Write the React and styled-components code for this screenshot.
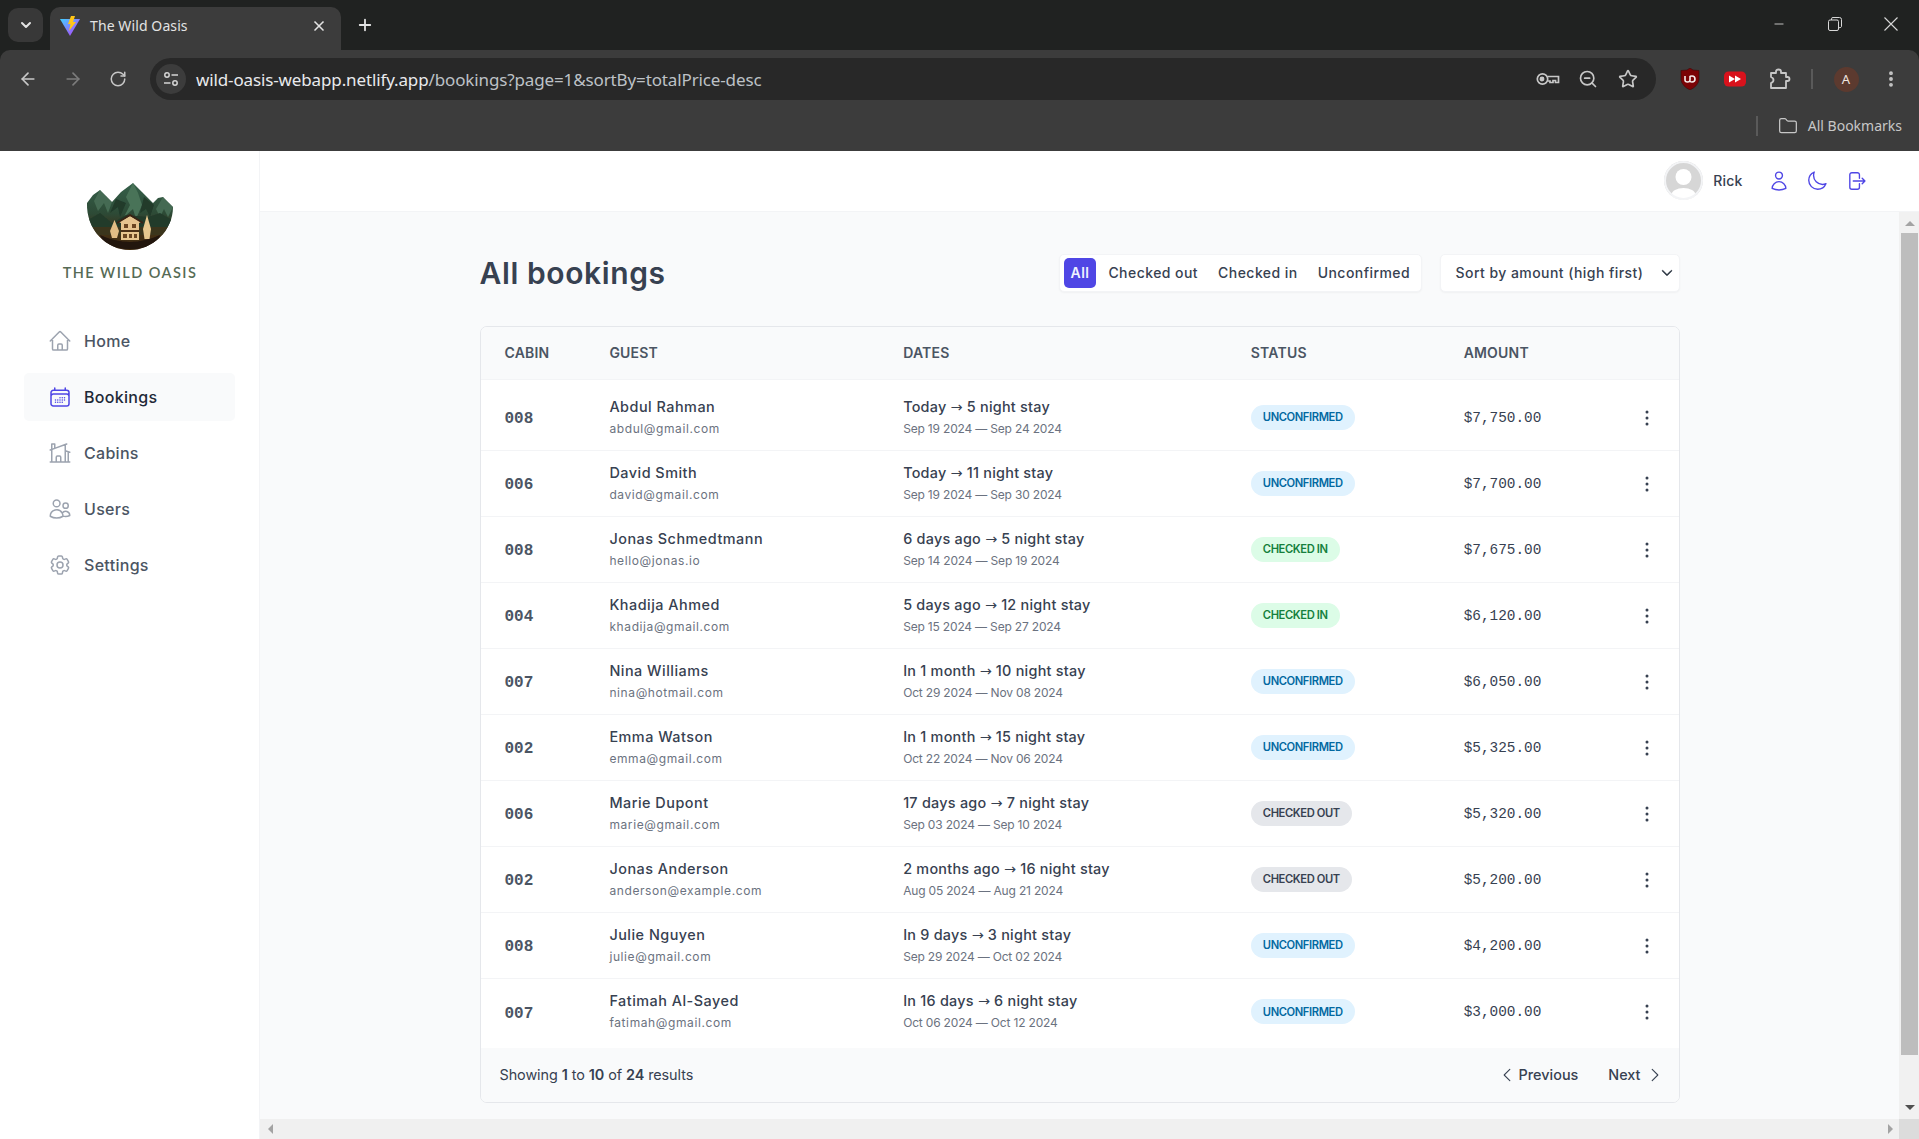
import React from 'react';
import styled, { createGlobalStyle } from 'styled-components';
import {
  HiOutlineHome,
  HiOutlineCalendarDays,
  HiOutlineHomeModern,
  HiOutlineUsers,
  HiOutlineCog6Tooth,
  HiOutlineUser,
  HiOutlineMoon,
  HiOutlineArrowRightOnRectangle,
  HiEllipsisVertical,
  HiChevronLeft,
  HiChevronRight,
  HiChevronDown,
} from 'react-icons/hi2';
import { ArrowLeft, ArrowRight, RotateCw, Star, ZoomOut, Folder, X, Plus, ChevronDown, Minus, EllipsisVertical } from 'lucide-react';

const uiFont = '"Inter", "Noto Sans", sans-serif';
const chromeFont = '"Noto Sans", "Open Sans", sans-serif';
const monoFont = '"Liberation Mono", monospace';

const GlobalStyle = createGlobalStyle`
  * { box-sizing: border-box; }
  html, body { margin: 0; padding: 0; overflow: hidden; }
  body { font-family: ${uiFont}; color: #374151; background: #fff; }
`;

const Browser = styled.div`
  width: 1919px;
  height: 1139px;
  display: flex;
  flex-direction: column;
  overflow: hidden;
  background: #202221;
`;

/* browser chrome */
const TabStrip = styled.div`
  height: 50px;
  flex: none;
  background: #202221;
  display: flex;
  align-items: flex-end;
  padding-left: 8px;
  color: #e3e3e3;
`;

const TabListButton = styled.div`
  width: 35px;
  height: 34px;
  margin-bottom: 8px;
  border-radius: 10px;
  background: #383838;
  display: flex;
  align-items: center;
  justify-content: center;
`;

const Tab = styled.div`
  width: 291px;
  height: 43px;
  margin-left: 7px;
  background: #3c3c3c;
  border-radius: 10px 10px 0 0;
  display: flex;
  align-items: center;
  padding: 0 14px 6px 10px;
  font-family: ${chromeFont};
  font-size: 14px;
  letter-spacing: 0.1px;
`;

const TabTitle = styled.span`
  flex: 1;
  margin-left: 10px;
`;

const NewTab = styled.div`
  margin: 0 0 8px 15px;
  height: 34px;
  display: flex;
  align-items: center;
`;

const WindowControls = styled.div`
  margin-left: auto;
  align-self: flex-start;
  height: 48px;
  display: flex;
  align-items: center;
`;

const WindowButton = styled.div`
  width: 56px;
  display: flex;
  justify-content: center;
`;

const Toolbar = styled.div`
  height: 50px;
  flex: none;
  background: #3c3c3c;
  border-radius: 10px 10px 0 0;
  display: flex;
  align-items: flex-start;
  padding: 8px 0 0 9px;
  color: #c7c7c7;
`;

const NavButton = styled.div`
  width: 37px;
  height: 42px;
  margin-right: 8px;
  display: flex;
  align-items: center;
  justify-content: center;
  color: ${(p) => (p.$dim ? '#7c7c7c' : '#c7c7c7')};
`;

const AddressBar = styled.div`
  width: 1506px;
  height: 42px;
  margin-left: 6px;
  border-radius: 21px;
  background: #282828;
  display: flex;
  align-items: center;
  padding: 0 18px 0 6px;
  font-family: ${chromeFont};
  font-size: 17px;
  letter-spacing: -0.13px;
`;

const SiteBadge = styled.div`
  width: 30px;
  height: 30px;
  border-radius: 50%;
  background: #3c3c3c;
  display: flex;
  align-items: center;
  justify-content: center;
  margin-right: 10px;
`;

const Host = styled.span`
  color: #e8eaed;
`;

const UrlPath = styled.span`
  color: #bdc1c6;
`;

const AddressIcons = styled.div`
  margin-left: auto;
  display: flex;
  align-items: center;
  gap: 20px;
  & > svg:first-child {
    margin-right: -2px;
  }
`;

const Extensions = styled.div`
  display: flex;
  align-items: center;
  height: 42px;
  margin-left: 11px;
`;

const ExtensionSlot = styled.div`
  width: ${(p) => p.$w || 45}px;
  display: flex;
  justify-content: center;
  align-items: center;
`;

const ToolbarDivider = styled.div`
  width: 2px;
  height: 20px;
  margin-left: 9px;
  background: #5a5a5a;
`;

const ProfileBadge = styled.div`
  width: 25px;
  height: 25px;
  border-radius: 50%;
  background: #5c3a2f;
  color: #f1e6e0;
  font-family: ${chromeFont};
  font-size: 13px;
  display: flex;
  align-items: center;
  justify-content: center;
`;

const BookmarksBar = styled.div`
  height: 51px;
  flex: none;
  background: #3c3c3c;
  display: flex;
  align-items: center;
  justify-content: flex-end;
  padding: 0 17px 0 0;
  color: #c7c7c7;
  font-family: ${chromeFont};
  font-size: 14px;
`;

const BookmarksDivider = styled.div`
  width: 2px;
  height: 20px;
  background: #5a5a5a;
  margin-right: 20px;
`;

const BookmarksLabel = styled.span`
  margin-left: 10px;
`;

/* app layout */
const AppLayout = styled.div`
  flex: 1;
  min-height: 0;
  display: grid;
  grid-template-columns: 260px 1fr;
  background: #fff;
`;

const Sidebar = styled.aside`
  background: #fff;
  border-right: 1px solid #f3f4f6;
  padding: 32px 24px 0;
`;

const LogoBox = styled.div`
  display: flex;
  flex-direction: column;
  align-items: center;
  margin-right: -1px;
`;

const LogoText = styled.div`
  margin-top: 13px;
  font-family: "Lato", sans-serif;
  font-size: 14.5px;
  font-weight: 600;
  letter-spacing: 1.45px;
  line-height: 18px;
  color: #566b55;
`;

const NavList = styled.nav`
  margin-top: 35px;
  display: flex;
  flex-direction: column;
  gap: 8px;
`;

const NavItem = styled.a`
  height: 48px;
  padding: 0 24px;
  display: flex;
  align-items: center;
  gap: 12px;
  border-radius: 5px;
  font-size: 16px;
  font-weight: 500;
  letter-spacing: 0.3px;
  color: ${(p) => (p.$active ? '#1f2937' : '#4b5563')};
  background: ${(p) => (p.$active ? '#f9fafb' : 'transparent')};

  svg {
    width: 24px;
    height: 24px;
    color: ${(p) => (p.$active ? '#4f46e5' : '#9ca3af')};
  }
`;

const RightColumn = styled.div`
  min-width: 0;
  min-height: 0;
  display: flex;
  flex-direction: column;
`;

const Header = styled.header`
  height: 61px;
  flex: none;
  background: #fff;
  border-bottom: 1px solid #f3f4f6;
  display: flex;
  align-items: center;
  justify-content: flex-end;
  padding: 0 44px 1px 0;
`;

const UserAvatar = styled.div`
  width: 39px;
  height: 39px;
  border-radius: 50%;
  outline: 2px solid #f3f4f6;
  outline-offset: -2px;
  overflow: hidden;
  margin-right: 10px;
`;

const UserName = styled.span`
  font-size: 14px;
  font-weight: 500;
  letter-spacing: 0.2px;
  color: #374151;
  margin-right: 17px;
`;

const HeaderIcon = styled.div`
  width: 38.5px;
  display: flex;
  justify-content: center;
  color: #4f46e5;
  svg {
    width: 22px;
    height: 22px;
  }
`;

const ScrollRow = styled.div`
  flex: 1;
  min-height: 0;
  display: flex;
`;

const Main = styled.main`
  flex: 1;
  min-width: 0;
  background: #f9fafb;
  padding-top: 39px;
`;

const Container = styled.div`
  width: 1200px;
  margin: 0 auto;
`;

const TitleRow = styled.div`
  height: 44px;
  display: flex;
  align-items: center;
`;

const Heading = styled.h1`
  margin: 0 auto 0 0;
  font-size: 30px;
  font-weight: 600;
  letter-spacing: 0.6px;
  color: #374151;
`;

const Filter = styled.div`
  height: 38px;
  width: 363px;
  padding: 4px;
  background: #fff;
  border: 1px solid #f3f4f6;
  border-radius: 5px;
  box-shadow: 0 1px 2px rgba(0, 0, 0, 0.04);
  display: flex;
  align-items: center;
`;

const FilterButton = styled.button`
  height: 30px;
  border: none;
  border-radius: 5px;
  padding: 0 ${(p) => (p.$active ? 7 : 10)}px 1px;
  margin-right: ${(p) => (p.$active ? 2 : 0)}px;
  font-family: ${uiFont};
  font-size: 14px;
  font-weight: ${(p) => (p.$active ? 600 : 500)};
  letter-spacing: 0.45px;
  color: ${(p) => (p.$active ? '#eef2ff' : '#374151')};
  background: ${(p) => (p.$active ? '#4f46e5' : 'transparent')};
  white-space: nowrap;
`;

const SortBox = styled.div`
  height: 38px;
  width: 240px;
  margin-left: 18px;
  padding: 0 5px 1px 15px;
  background: #fff;
  border: 1px solid #f3f4f6;
  border-radius: 5px;
  box-shadow: 0 1px 2px rgba(0, 0, 0, 0.04);
  display: flex;
  align-items: center;
  justify-content: space-between;
  font-size: 14px;
  font-weight: 500;
  letter-spacing: 0.45px;
  color: #374151;
  svg {
    stroke-width: 1.2;
    color: #1f2937;
  }
`;

const Table = styled.div`
  margin-top: 31px;
  border: 1px solid #e5e7eb;
  border-radius: 7px;
  background: #fff;
  font-size: 14px;
  overflow: hidden;
`;

const RowGrid = styled.div`
  display: grid;
  grid-template-columns: 0.6fr 2fr 2.4fr 1.4fr 1fr 32px;
  column-gap: 24px;
  align-items: center;
  padding: 0 24px;
`;

const TableHead = styled(RowGrid)`
  height: 53px;
  padding-bottom: 1px;
  background: #f9fafb;
  border-bottom: 1px solid #f3f4f6;
  font-size: 14px;
  font-weight: 600;
  letter-spacing: 0.2px;
  color: #4b5563;
  text-transform: uppercase;
`;

const TableBody = styled.div`
  padding: 5px 0 3px;
`;

const TableRow = styled(RowGrid)`
  height: 66px;
  &:not(:last-child) {
    border-bottom: 1px solid #f3f4f6;
  }
`;

const Cabin = styled.div`
  font-family: ${monoFont};
  font-size: 16px;
  font-weight: 700;
  color: #4b5563;
  padding-top: 3px;
`;

const Stacked = styled.div`
  display: flex;
  flex-direction: column;
  gap: 2px;
`;

const MainLine = styled.span`
  font-size: 14.4px;
  line-height: 20px;
  font-weight: 500;
  letter-spacing: ${(p) => (p.$name ? 0.5 : 0.25)}px;
  color: #374151;
`;

const StayArrow = styled.span`
  font-family: "DejaVu Sans", sans-serif;
  font-weight: 400;
  letter-spacing: 0;
`;

const SubLine = styled.span`
  font-size: 12px;
  line-height: 20px;
  letter-spacing: ${(p) => (p.$email ? 0.6 : -0.18)}px;
  color: #6b7280;
`;

const badgeColors = {
  unconfirmed: { bg: '#e0f2fe', fg: '#0369a1' },
  'checked-in': { bg: '#dcfce7', fg: '#15803d' },
  'checked-out': { bg: '#e5e7eb', fg: '#374151' },
};

const Badge = styled.span`
  justify-self: start;
  height: 25px;
  display: flex;
  align-items: center;
  padding: 0 12px;
  border-radius: 100px;
  font-size: 11.2px;
  font-weight: 600;
  letter-spacing: -0.4px;
  text-transform: uppercase;
  margin-top: -1px;
  background: ${(p) => badgeColors[p.$status].bg};
  color: ${(p) => badgeColors[p.$status].fg};
`;

const Amount = styled.div`
  font-family: ${monoFont};
  font-size: 14.4px;
  font-weight: 400;
  color: #374151;
`;

const MenuToggle = styled.button`
  width: 32px;
  height: 32px;
  padding: 4px;
  border: none;
  background: none;
  transform: translateX(8px);
  color: #374151;
  svg {
    width: 24px;
    height: 24px;
    display: block;
  }
`;

const TableFooter = styled.div`
  height: 54px;
  background: #f9fafb;
  padding: 0 15px 1px 19px;
  display: flex;
  align-items: center;
  justify-content: space-between;
`;

const Showing = styled.p`
  margin: 0;
  font-size: 14.4px;
  letter-spacing: -0.07px;
  color: #374151;
  strong {
    font-weight: 600;
  }
`;

const Pager = styled.div`
  display: flex;
  gap: 30px;
`;

const PagerButton = styled.button`
  border: none;
  background: none;
  padding: 0;
  display: flex;
  align-items: center;
  gap: ${(p) => (p.$prev ? 3 : 5)}px;
  font-family: ${uiFont};
  font-size: 14.4px;
  font-weight: 500;
  color: #374151;
  svg {
    width: 18px;
    height: 18px;
  }
`;

/* scrollbars */
const VScroll = styled.div`
  width: 20px;
  flex: none;
  background: #f1f1f1;
  display: flex;
  flex-direction: column;
  align-items: center;
`;

const VThumb = styled.div`
  width: 17px;
  height: 822px;
  margin: 0 0 auto 1px;
  background: #bdbdbd;
`;

const ScrollArrow = styled.div`
  width: 0;
  height: 0;
  flex: none;
  border-style: solid;
  border-color: transparent;
  ${(p) => p.$up && `border-width: 0 5px 5px; border-bottom-color: #a3a3a3; margin-top: 9px; margin-left: 1px; margin-bottom: 7px;`}
  ${(p) => p.$down && `border-width: 5px 5px 0; border-top-color: #505050; margin-bottom: 9px; margin-left: 1px;`}
  ${(p) => p.$left && `border-width: 5px 5px 5px 0; border-right-color: #a3a3a3;`}
  ${(p) => p.$right && `border-width: 5px 0 5px 5px; border-left-color: #a3a3a3;`}
`;

const HScroll = styled.div`
  height: 20px;
  flex: none;
  background: #f0f0f0;
  display: flex;
  align-items: center;
  padding-left: 8px;
`;

const HScrollCorner = styled.div`
  width: 20px;
  height: 20px;
  margin-left: 6px;
  background: #dcdcdc;
`;

const Spacer = styled.div`
  flex: 1;
`;

const bookings = [
  ['008', 'Abdul Rahman', 'abdul@gmail.com', 'Today', 5, 'Sep 19 2024 — Sep 24 2024', 'unconfirmed', '$7,750.00'],
  ['006', 'David Smith', 'david@gmail.com', 'Today', 11, 'Sep 19 2024 — Sep 30 2024', 'unconfirmed', '$7,700.00'],
  ['008', 'Jonas Schmedtmann', 'hello@jonas.io', '6 days ago', 5, 'Sep 14 2024 — Sep 19 2024', 'checked-in', '$7,675.00'],
  ['004', 'Khadija Ahmed', 'khadija@gmail.com', '5 days ago', 12, 'Sep 15 2024 — Sep 27 2024', 'checked-in', '$6,120.00'],
  ['007', 'Nina Williams', 'nina@hotmail.com', 'In 1 month', 10, 'Oct 29 2024 — Nov 08 2024', 'unconfirmed', '$6,050.00'],
  ['002', 'Emma Watson', 'emma@gmail.com', 'In 1 month', 15, 'Oct 22 2024 — Nov 06 2024', 'unconfirmed', '$5,325.00'],
  ['006', 'Marie Dupont', 'marie@gmail.com', '17 days ago', 7, 'Sep 03 2024 — Sep 10 2024', 'checked-out', '$5,320.00'],
  ['002', 'Jonas Anderson', 'anderson@example.com', '2 months ago', 16, 'Aug 05 2024 — Aug 21 2024', 'checked-out', '$5,200.00'],
  ['008', 'Julie Nguyen', 'julie@gmail.com', 'In 9 days', 3, 'Sep 29 2024 — Oct 02 2024', 'unconfirmed', '$4,200.00'],
  ['007', 'Fatimah Al-Sayed', 'fatimah@gmail.com', 'In 16 days', 6, 'Oct 06 2024 — Oct 12 2024', 'unconfirmed', '$3,000.00'],
];

const navItems = [
  ['Home', HiOutlineHome],
  ['Bookings', HiOutlineCalendarDays],
  ['Cabins', HiOutlineHomeModern],
  ['Users', HiOutlineUsers],
  ['Settings', HiOutlineCog6Tooth],
];

const ViteIcon = () => (
  <svg width="20" height="20" viewBox="0 0 20 20">
    <defs>
      <linearGradient id="viteBg" x1="0" y1="0" x2="1" y2="1">
        <stop offset="0" stopColor="#41d1ff" />
        <stop offset="1" stopColor="#bd34fe" />
      </linearGradient>
    </defs>
    <path d="M0 3 L20 3 L10 20 Z" fill="url(#viteBg)" />
    <path d="M11 0 L15 0 L13 6 L16 6 L9 15 L10.5 8 L8 8 Z" fill="#ffc517" />
  </svg>
);

const SiteSettingsIcon = () => (
  <svg width="16" height="16" viewBox="0 0 16 16" fill="none" stroke="#d5d5d5" strokeWidth="1.5">
    <circle cx="4" cy="4" r="2.2" />
    <path d="M8.5 4 H15" />
    <circle cx="12" cy="12" r="2.2" />
    <path d="M1 12 H7.5" />
  </svg>
);

const KeyIcon = () => (
  <svg width="24" height="16" viewBox="0 0 24 16" fill="none" stroke="#c7c7c7" strokeWidth="1.7">
    <circle cx="6.5" cy="8" r="5.2" />
    <circle cx="6" cy="8" r="1.6" fill="#c7c7c7" />
    <path d="M11.5 5.5 H22.5 V11.5 H19.5 V9.5 H17 V11.5 H14 V10 H11.5" />
  </svg>
);

const ExtensionPuzzleIcon = () => (
  <svg width="22" height="22" viewBox="0 0 22 22" fill="none" stroke="#c7c7c7" strokeWidth="1.8" strokeLinejoin="round">
    <path d="M2 5 H7 V3.5 Q7 1.5 9.5 1.5 Q12 1.5 12 3.5 V5 H17 V9 H18.5 Q20.5 9 20.5 11 Q20.5 13 18.5 13 H17 V20 H2 V15 Q4.5 14 4.5 12 Q4.5 10 2 9 Z" />
  </svg>
);

const RestoreIcon = () => (
  <svg width="14" height="14" viewBox="0 0 14 14" fill="none" stroke="#d8d8d8" strokeWidth="1">
    <rect x="0.5" y="3" width="10" height="10.5" rx="1.5" />
    <path d="M3.5 3 V1.8 Q3.5 0.5 5 0.5 H11.5 Q13.5 0.5 13.5 2.5 V9.5 Q13.5 10.8 10.5 10.8" />
  </svg>
);

const CloseIcon = () => (
  <svg width="14" height="14" viewBox="0 0 14 14" stroke="#d8d8d8" strokeWidth="1.1">
    <path d="M0.5 0.5 L13.5 13.5 M13.5 0.5 L0.5 13.5" />
  </svg>
);

const UBlockIcon = () => (
  <svg width="20" height="22" viewBox="0 0 20 22">
    <path d="M10 0 L13 2 L19 2.5 V12 Q18 18 10 22 Q2 18 1 12 V2.5 L7 2 Z" fill="#7b0306" stroke="#3a0b0c" strokeWidth="0.6" />
    <path d="M5 8 V12 Q5 14 7.5 14 Q10 14 10 12 V8 M10 8.5 Q10 8 12 8 Q15 8 15 11 Q15 14 12 14 Q10 14 10 13" fill="none" stroke="#f5eaea" strokeWidth="1.6" />
  </svg>
);

const FastForwardIcon = () => (
  <svg width="22" height="16" viewBox="0 0 22 16">
    <rect x="0" y="0.5" width="22" height="15" rx="4.5" fill="#d8121c" />
    <path d="M5 4.5 L11 8 L5 11.5 Z M11 4.5 L17 8 L11 11.5 Z" fill="#fff" />
  </svg>
);

const AvatarImage = () => (
  <svg width="39" height="39" viewBox="0 0 39 39">
    <rect width="39" height="39" fill="#d6d6d6" />
    <circle cx="19.5" cy="16" r="8" fill="#fff" />
    <ellipse cx="19.5" cy="34" rx="12" ry="7" fill="#fff" />
  </svg>
);

const LogoMark = () => (
  <svg width="88" height="68" viewBox="0 0 88 68">
    <defs>
      <clipPath id="logoClip">
        <path d="M1 20 L7 12 L14 7 L20 13 L26 19 L35 9 L47 0 L56 9 L67 20 L72 15 L77 14 L83 20 L87 24 C87 48 66 67 44 67 C20 67 0 46 1 20 Z" />
      </clipPath>
      <linearGradient id="logoGround" x1="0" y1="0" x2="0" y2="1">
        <stop offset="0" stopColor="#35604a" />
        <stop offset="0.45" stopColor="#2d4a36" />
        <stop offset="0.7" stopColor="#3d3019" />
        <stop offset="1" stopColor="#2c1c0c" />
      </linearGradient>
      <filter id="logoSoft">
        <feGaussianBlur stdDeviation="0.4" />
      </filter>
    </defs>
    <g clipPath="url(#logoClip)">
      <rect width="88" height="68" fill="url(#logoGround)" />
      <g filter="url(#logoSoft)">
        <path d="M47 0 L40 14 L44 22 L38 34 L47 26 L50 36 L56 22 L52 10 Z" fill="#4a7359" />
        <path d="M30 16 L24 30 L32 24 L34 34 L40 20 Z" fill="#203a2a" />
        <path d="M58 14 L54 30 L60 26 L64 34 L68 22 Z" fill="#203a2a" />
        <path d="M14 7 L8 18 L12 28 L18 20 L22 30 L26 19 Z" fill="#446b52" />
        <path d="M77 14 L70 26 L74 34 L78 26 L82 34 L87 24 Z" fill="#446b52" />
        <path d="M0 38 L14 30 L26 40 L40 32 L62 34 L74 30 L88 38 V52 H0 Z" fill="#233a2a" />
        <path d="M0 44 H88 V68 H0 Z" fill="#4a3116" opacity="0.6" />
        <path d="M14 52 Q44 66 74 52 L72 60 Q44 72 18 60 Z" fill="#20140a" />
        <path d="M33 39 L44 33 L55 39 L53 40 V57 H35 V40 Z" fill="#e6c48f" />
        <path d="M31 40 L44 32 L57 40" fill="none" stroke="#3a2412" strokeWidth="1.6" />
        <path d="M35 47 H53 V49 H35 Z" fill="#4a2e14" />
        <path d="M38 41 H42 V45 H38 Z M46 41 H50 V45 H46 Z M37 51 H41 V55 H37 Z M43 51 H46 V55 H43 Z M48 51 H51 V55 H48 Z" fill="#6b4420" />
        <path d="M28.5 37 L33 48 L31 55 H26 L24 48 Z" fill="#e2bd84" />
        <path d="M61 32 L65 46 L63.5 56 H58.5 L57 46 Z" fill="#e8c98f" />
      </g>
    </g>
  </svg>
);

export default function App() {
  return (
    <>
      <GlobalStyle />
      <Browser>
        <TabStrip>
          <TabListButton>
            <ChevronDown size={16} strokeWidth={3} />
          </TabListButton>
          <Tab>
            <ViteIcon />
            <TabTitle>The Wild Oasis</TabTitle>
            <X size={16} strokeWidth={2.5} />
          </Tab>
          <NewTab>
            <Plus size={18} strokeWidth={2.4} />
          </NewTab>
          <WindowControls>
            <WindowButton>
              <Minus size={14} strokeWidth={1.4} />
            </WindowButton>
            <WindowButton>
              <RestoreIcon />
            </WindowButton>
            <WindowButton>
              <CloseIcon />
            </WindowButton>
          </WindowControls>
        </TabStrip>
        <Toolbar>
          <NavButton>
            <ArrowLeft size={20} />
          </NavButton>
          <NavButton $dim>
            <ArrowRight size={20} />
          </NavButton>
          <NavButton>
            <RotateCw size={18} />
          </NavButton>
          <AddressBar>
            <SiteBadge>
              <SiteSettingsIcon />
            </SiteBadge>
            <Host>wild-oasis-webapp.netlify.app</Host>
            <UrlPath>/bookings?page=1&amp;sortBy=totalPrice-desc</UrlPath>
            <AddressIcons>
              <KeyIcon />
              <ZoomOut size={20} />
              <Star size={20} />
            </AddressIcons>
          </AddressBar>
          <Extensions>
            <ExtensionSlot>
              <UBlockIcon />
            </ExtensionSlot>
            <ExtensionSlot>
              <FastForwardIcon />
            </ExtensionSlot>
            <ExtensionSlot>
              <ExtensionPuzzleIcon />
            </ExtensionSlot>
            <ToolbarDivider />
            <ExtensionSlot $w={66}>
              <ProfileBadge>A</ProfileBadge>
            </ExtensionSlot>
            <ExtensionSlot $w={24}>
              <EllipsisVertical size={20} strokeWidth={2.6} />
            </ExtensionSlot>
          </Extensions>
        </Toolbar>
        <BookmarksBar>
          <BookmarksDivider />
          <Folder size={20} strokeWidth={1.5} />
          <BookmarksLabel>All Bookmarks</BookmarksLabel>
        </BookmarksBar>

        <AppLayout>
          <Sidebar>
            <LogoBox>
              <LogoMark />
              <LogoText>THE WILD OASIS</LogoText>
            </LogoBox>
            <NavList>
              {navItems.map(([label, Icon]) => (
                <NavItem key={label} $active={label === 'Bookings'}>
                  <Icon />
                  {label}
                </NavItem>
              ))}
            </NavList>
          </Sidebar>

          <RightColumn>
            <Header>
              <UserAvatar>
                <AvatarImage />
              </UserAvatar>
              <UserName>Rick</UserName>
              <HeaderIcon>
                <HiOutlineUser />
              </HeaderIcon>
              <HeaderIcon>
                <HiOutlineMoon />
              </HeaderIcon>
              <HeaderIcon>
                <HiOutlineArrowRightOnRectangle />
              </HeaderIcon>
            </Header>
            <ScrollRow>
              <Main>
                <Container>
                  <TitleRow>
                    <Heading>All bookings</Heading>
                    <Filter>
                      <FilterButton $active>All</FilterButton>
                      <FilterButton>Checked out</FilterButton>
                      <FilterButton>Checked in</FilterButton>
                      <FilterButton>Unconfirmed</FilterButton>
                    </Filter>
                    <SortBox>
                      Sort by amount (high first)
                      <HiChevronDown size={14} />
                    </SortBox>
                  </TitleRow>
                  <Table>
                    <TableHead>
                      <div>Cabin</div>
                      <div>Guest</div>
                      <div>Dates</div>
                      <div>Status</div>
                      <div>Amount</div>
                      <div />
                    </TableHead>
                    <TableBody>
                      {bookings.map(([cabin, name, email, when, nights, range, status, amount], i) => (
                        <TableRow key={i}>
                          <Cabin>{cabin}</Cabin>
                          <Stacked>
                            <MainLine $name>{name}</MainLine>
                            <SubLine $email>{email}</SubLine>
                          </Stacked>
                          <Stacked>
                            <MainLine>
                              {when} <StayArrow>→</StayArrow> {nights} night stay
                            </MainLine>
                            <SubLine>{range}</SubLine>
                          </Stacked>
                          <Badge $status={status}>{status.replace('-', ' ')}</Badge>
                          <Amount>{amount}</Amount>
                          <MenuToggle>
                            <HiEllipsisVertical />
                          </MenuToggle>
                        </TableRow>
                      ))}
                    </TableBody>
                    <TableFooter>
                      <Showing>
                        Showing <strong>1</strong> to <strong>10</strong> of <strong>24</strong> results
                      </Showing>
                      <Pager>
                        <PagerButton $prev>
                          <HiChevronLeft />
                          Previous
                        </PagerButton>
                        <PagerButton>
                          Next
                          <HiChevronRight />
                        </PagerButton>
                      </Pager>
                    </TableFooter>
                  </Table>
                </Container>
              </Main>
              <VScroll>
                <ScrollArrow $up />
                <VThumb />
                <ScrollArrow $down />
              </VScroll>
            </ScrollRow>
            <HScroll>
              <ScrollArrow $left />
              <Spacer />
              <ScrollArrow $right />
              <HScrollCorner />
            </HScroll>
          </RightColumn>
        </AppLayout>
      </Browser>
    </>
  );
}
